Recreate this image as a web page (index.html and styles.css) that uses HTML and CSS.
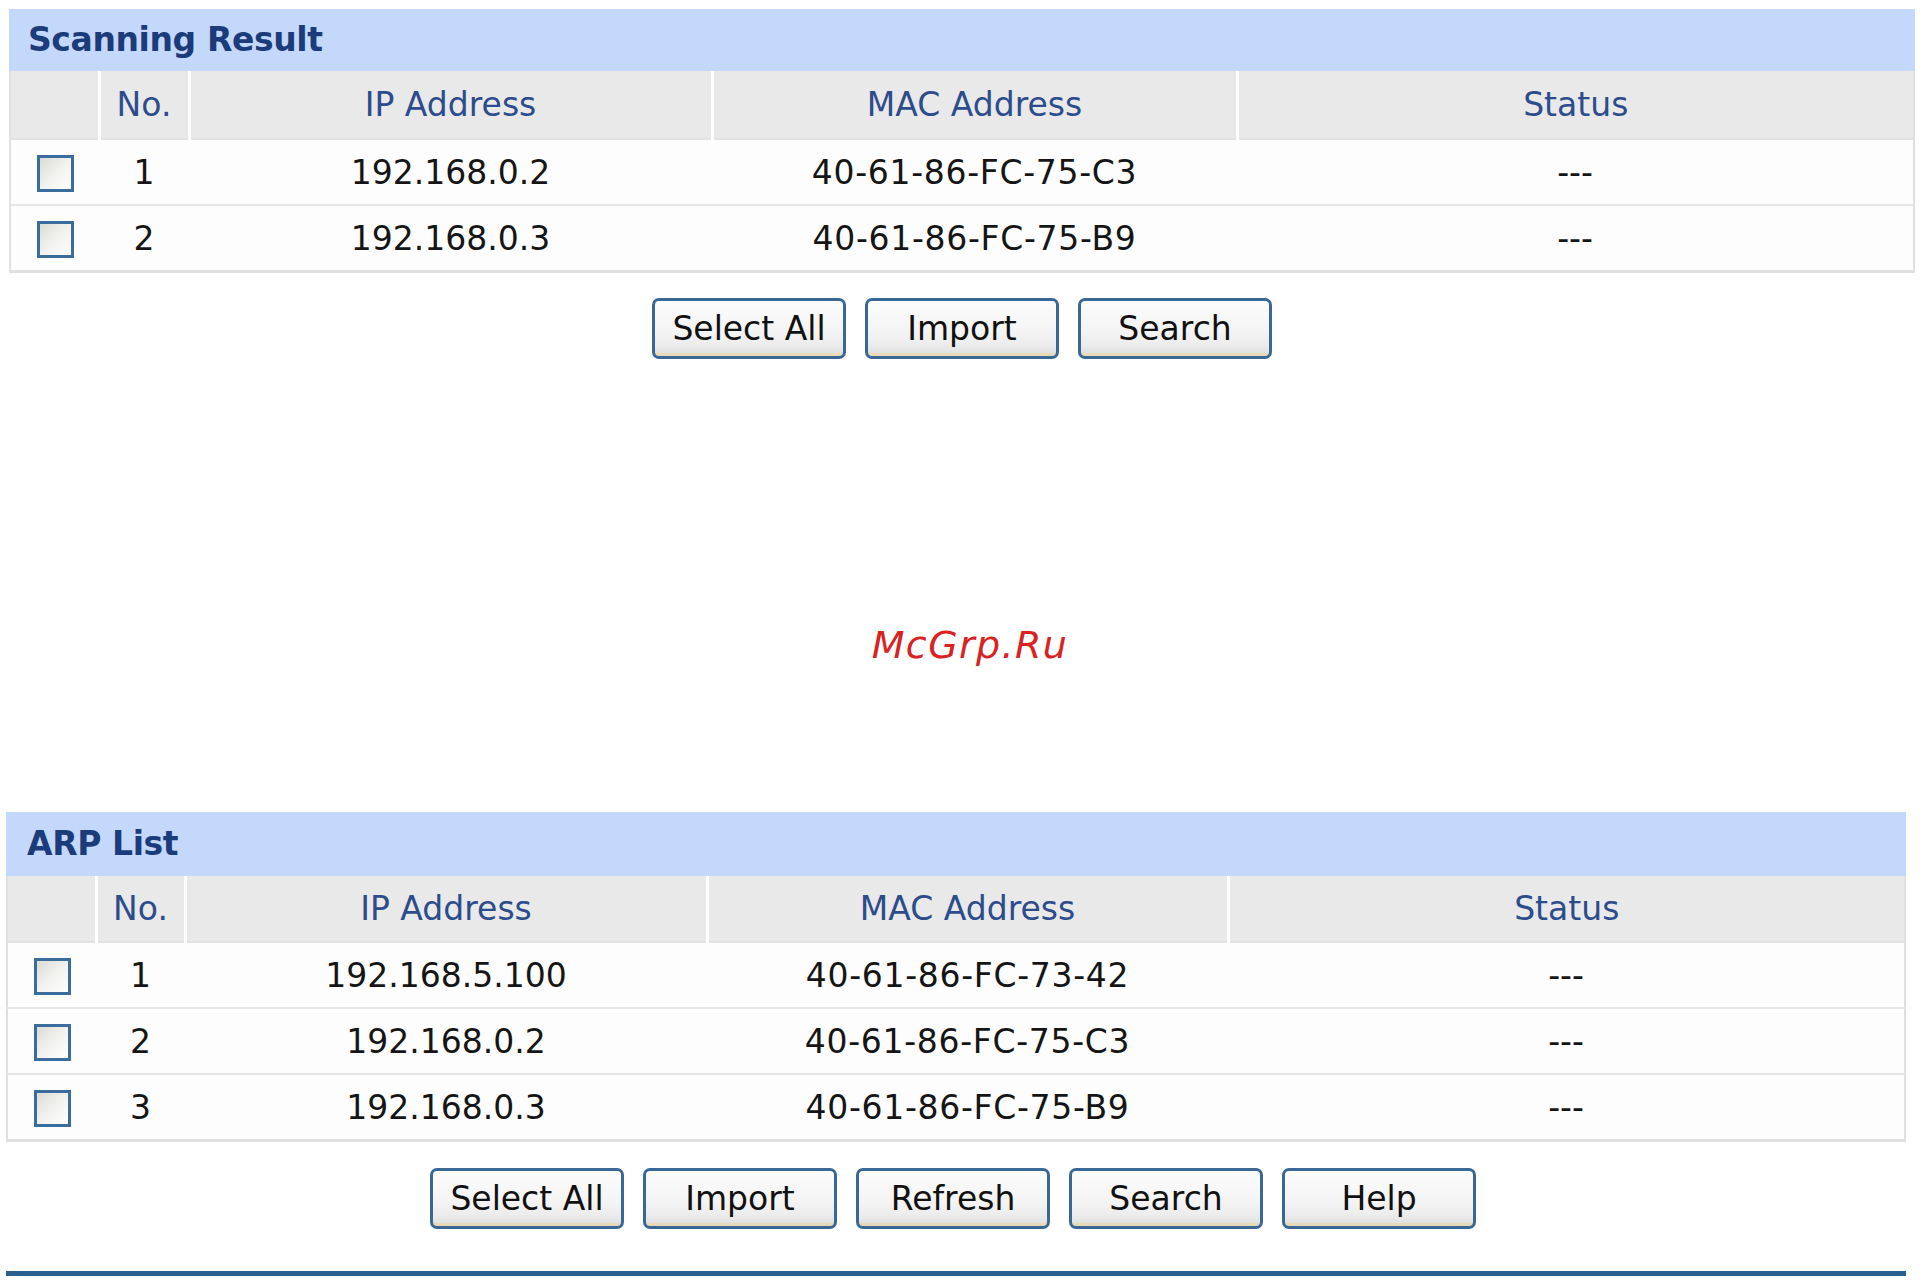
FILE: index.html
```html
<!DOCTYPE html>
<html>
<head>
<meta charset="utf-8">
<link rel="stylesheet" href="styles.css">
</head>
<body>
<section class="panel panel-scan">
  <div class="panel-title">Scanning Result</div>
  <table class="grid">
    <colgroup>
      <col class="c-chk"><col class="c-no"><col class="c-ip"><col class="c-mac"><col>
    </colgroup>
    <thead>
      <tr><th></th><th>No.</th><th>IP Address</th><th>MAC Address</th><th class="last">Status</th></tr>
    </thead>
    <tbody>
      <tr><td><span class="chk"></span></td><td>1</td><td>192.168.0.2</td><td class="mac">40-61-86-FC-75-C3</td><td>---</td></tr>
      <tr><td><span class="chk"></span></td><td>2</td><td>192.168.0.3</td><td class="mac">40-61-86-FC-75-B9</td><td>---</td></tr>
    </tbody>
  </table>
  <div class="btns">
    <button class="btn">Select All</button>
    <button class="btn">Import</button>
    <button class="btn">Search</button>
  </div>
</section>

<div class="gap"><span class="mark">McGrp.Ru</span></div>

<section class="panel panel-arp">
  <div class="panel-title">ARP List</div>
  <table class="grid">
    <colgroup>
      <col class="c-chk"><col class="c-no"><col class="c-ip"><col class="c-mac"><col>
    </colgroup>
    <thead>
      <tr><th></th><th>No.</th><th>IP Address</th><th>MAC Address</th><th class="last">Status</th></tr>
    </thead>
    <tbody>
      <tr><td><span class="chk"></span></td><td>1</td><td>192.168.5.100</td><td class="mac">40-61-86-FC-73-42</td><td>---</td></tr>
      <tr><td><span class="chk"></span></td><td>2</td><td>192.168.0.2</td><td class="mac">40-61-86-FC-75-C3</td><td>---</td></tr>
      <tr><td><span class="chk"></span></td><td>3</td><td>192.168.0.3</td><td class="mac">40-61-86-FC-75-B9</td><td>---</td></tr>
    </tbody>
  </table>
  <div class="btns">
    <button class="btn">Select All</button>
    <button class="btn">Import</button>
    <button class="btn">Refresh</button>
    <button class="btn">Search</button>
    <button class="btn">Help</button>
  </div>
  <div class="bottom-line"></div>
</section>
</body>
</html>
```

FILE: styles.css
```css
html, body {
  margin: 0;
  padding: 0;
  background: #ffffff;
}

body {
  width: 1928px;
  font-family: "DejaVu Sans", Verdana, sans-serif;
  color: #151515;
}

.panel-scan {
  margin: 9px 0 0 9px;
  width: 1906px;
}

.panel-arp {
  margin: 0 0 0 6px;
  width: 1900px;
}

.panel-title {
  height: 62px;
  background: #c4d8fc;
  color: #1c3b7a;
  font-weight: bold;
  font-size: 33px;
  letter-spacing: -0.4px;
  line-height: 62px;
  padding-left: 19px;
}

.panel-arp .panel-title {
  height: 64px;
  line-height: 64px;
  padding-left: 21px;
}

.grid {
  width: 100%;
  border-collapse: collapse;
  table-layout: fixed;
  font-size: 33px;
  background: #fdfdfd;
  border-left: 2px solid #e0e0e0;
  border-right: 2px solid #e0e0e0;
  border-bottom: 3px solid #e0e0e0;
}

.c-chk { width: 89px; }
.c-no { width: 90px; }
.c-ip { width: 523px; }
.c-mac { width: 525px; }

.panel-arp .c-chk { width: 89px; }
.panel-arp .c-no { width: 89px; }
.panel-arp .c-ip { width: 522px; }
.panel-arp .c-mac { width: 521px; }

.grid th {
  height: 67px;
  padding: 0;
  background: #e9e9e9;
  color: #2c4c8c;
  font-weight: normal;
  text-align: center;
  border-right: 3px solid #ffffff;
  border-bottom: 2px solid #e2e2e2;
}

.grid th.last {
  border-right: none;
}

.panel-arp .grid th {
  height: 65px;
}

.grid td {
  height: 64px;
  padding: 0;
  text-align: center;
  border-bottom: 2px solid #e6e6e6;
}

.grid td.mac {
  letter-spacing: 0.7px;
}

.panel-arp .grid td {
  height: 64px;
}

.grid tr:last-child td {
  border-bottom: none;
}

.chk {
  display: inline-block;
  width: 31px;
  height: 31px;
  border: 3px solid #3a6d9d;
  background: linear-gradient(135deg, #dcdcd6 0%, #f3f3f1 55%, #ffffff 100%);
  vertical-align: middle;
  margin-left: 0;
}

.btns {
  display: flex;
  justify-content: center;
  gap: 19px;
  padding-top: 25px;
}

.btn {
  width: 194px;
  height: 61px;
  padding: 0;
  margin: 0;
  border: 3px solid #3a6896;
  border-radius: 7px;
  background: linear-gradient(to bottom, #fcfcfc 0%, #f4f4f4 55%, #ececec 80%, #dcdcdc 100%);
  font-family: "DejaVu Sans", Verdana, sans-serif;
  font-size: 33px;
  color: #111111;
  box-shadow: inset 0 -9px 0 -6px rgba(240, 215, 150, 0.55);
}

.panel-arp .btns {
  padding-top: 26px;
  padding-right: 6px;
}

.gap {
  padding-top: 263px;
  padding-bottom: 144px;
  text-align: center;
  padding-left: 12px;
  height: 46px;
}

.mark {
  font-family: "DejaVu Sans", sans-serif;
  font-style: italic;
  font-size: 38px;
  line-height: 46px;
  letter-spacing: 1.4px;
  color: #d92222;
}

.bottom-line {
  margin-top: 42px;
  height: 5px;
  background: #2b5f8e;
}
```
